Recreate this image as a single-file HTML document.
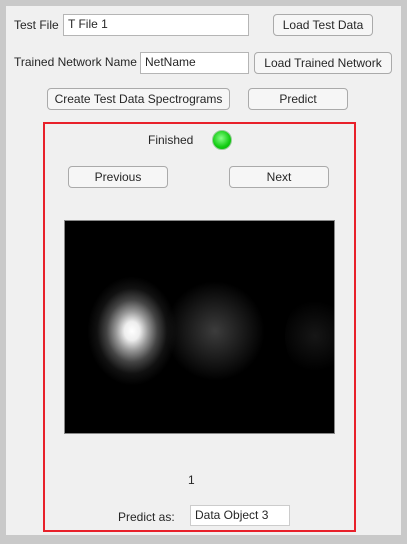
<!DOCTYPE html><html><head><style>
body{margin:0;width:407px;height:544px;background:#c9c9c9;position:relative;overflow:hidden;font-family:"Liberation Sans",sans-serif;font-size:12px;color:#262626}
.p{position:absolute;left:6px;top:6px;width:395px;height:529px;background:#f0f0f0}
.a{position:absolute}
.b{position:absolute;border:1px solid #aaa;border-radius:4px;background:#f6f6f6;text-align:center;box-sizing:border-box;line-height:20px}
.i{position:absolute;border:1px solid #b5b5b5;background:#fff;box-sizing:border-box;line-height:19px;padding-left:4px}
</style></head><body>
<div class="p"></div>
<div class="a" style="left:14px;top:18px">Test File</div>
<div class="i" style="left:63px;top:14px;width:186px;height:22px">T File 1</div>
<div class="b" style="left:273px;top:14px;width:100px;height:22px">Load Test Data</div>
<div class="a" style="left:14px;top:55px">Trained Network Name</div>
<div class="i" style="left:140px;top:52px;width:109px;height:22px">NetName</div>
<div class="b" style="left:254px;top:52px;width:138px;height:22px">Load Trained Network</div>
<div class="b" style="left:47px;top:88px;width:183px;height:22px">Create Test Data Spectrograms</div>
<div class="b" style="left:248px;top:88px;width:100px;height:22px">Predict</div>
<div class="a" style="left:43px;top:122px;width:313px;height:410px;border:2.5px solid #e8202a;box-sizing:border-box"></div>
<div class="a" style="left:148px;top:133px">Finished</div>
<div class="a" style="left:212px;top:130px;width:20px;height:20px;border-radius:50%;background:radial-gradient(circle at 45% 40%,#8f8,#1c1 60%,#0a0);border:1px solid #9c9;box-sizing:border-box"></div>
<div class="b" style="left:68px;top:166px;width:100px;height:22px">Previous</div>
<div class="b" style="left:229px;top:166px;width:100px;height:22px">Next</div>
<div class="a" style="left:64px;top:220px;width:271px;height:214px;background:#000;overflow:hidden;border:1px solid #888;box-sizing:border-box">
<div class="a" style="left:22px;top:55px;width:90px;height:110px;border-radius:50%;background:radial-gradient(ellipse at 50% 50%,#fff 0%,#eee 12%,#999 25%,#444 40%,#111 55%,rgba(0,0,0,0) 70%)"></div>
<div class="a" style="left:100px;top:60px;width:100px;height:100px;border-radius:50%;background:radial-gradient(circle,#3c3c3c 0%,#1e1e1e 35%,rgba(0,0,0,0) 70%)"></div>
<div class="a" style="left:220px;top:75px;width:60px;height:80px;border-radius:50%;background:radial-gradient(circle,#161616 0%,rgba(0,0,0,0) 70%)"></div>
</div>
<div class="a" style="left:188px;top:473px">1</div>
<div class="a" style="left:118px;top:510px">Predict as:</div>
<div class="i" style="left:190px;top:505px;width:100px;height:21px;border-color:#ccc">Data Object 3</div>
</body></html>
